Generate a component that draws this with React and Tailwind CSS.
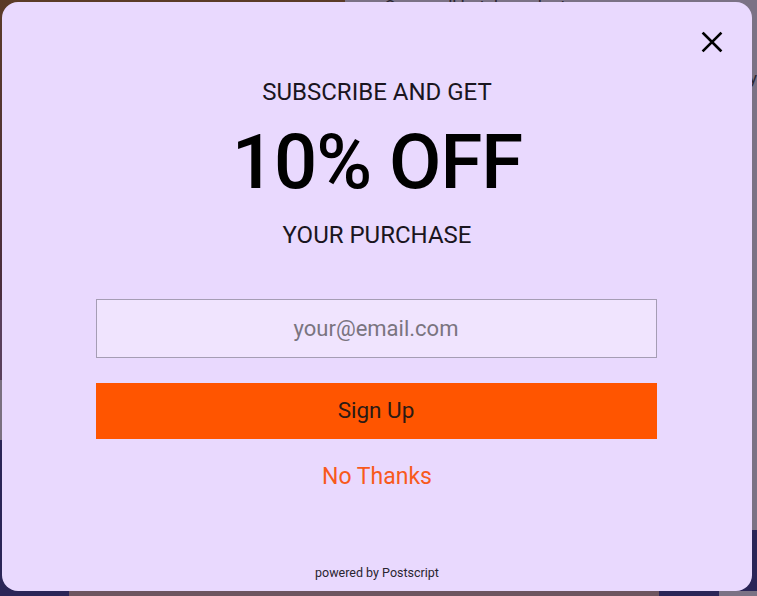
import React from "react";

const App = () => {
  return (
    <div className="relative h-[596px] w-[757px] overflow-hidden bg-[#7b7285]" style={{ fontFamily: "Roboto, 'Liberation Sans', sans-serif" }}>
      {/* page behind the popup, dimmed */}
      <div className="flex h-[530px]">
        <div className="flex w-[357px] flex-col">
          <div className="h-[300px] bg-gradient-to-b from-[#5b3b27] to-[#4a2c3e]"></div>
          <div className="h-[80px] bg-[#5a3f5c]"></div>
          <div className="h-[60px] bg-[#7a7080]"></div>
          <div className="flex-1 bg-[#2b2557]"></div>
        </div>
        <div className="flex-1 bg-[#7b7285] pl-[39px] text-[17px] leading-[24px] text-[#2a2530]">
          <p className="-mt-[6px]">Our small batch product</p>
          <p className="pl-[358px]">t</p>
          <p className="pl-[358px]">z</p>
          <p className="pl-[356px]">sy</p>
        </div>
      </div>
      <div className="flex h-[66px] bg-[#2b2557]">
        <div className="w-[69px]"></div>
        <div className="mt-[61px] h-[5px] w-[590px] bg-[#6e5560]"></div>
        <div className="w-[60px]"></div>
        <div className="mt-[61px] h-[5px] flex-1 bg-[#7b7285]"></div>
      </div>

      {/* popup */}
      <div className="absolute left-[2px] top-[2px] flex h-[589px] w-[750px] flex-col items-center rounded-[16px] bg-[#e9d9fe]">
        <button className="absolute right-[28px] top-[28px] text-black">
          <svg width="24" height="24" viewBox="0 0 24 24" fill="none" stroke="currentColor" strokeWidth="2.6" strokeLinecap="square">
            <path d="M3.5 3.5 L20.5 20.5 M20.5 3.5 L3.5 20.5" />
          </svg>
        </button>

        <p className="mt-[76px] text-[24px] leading-[28px] text-[#1a1520]">SUBSCRIBE AND GET</p>
        <p className="mt-[12px] text-[76px] font-medium leading-[88px] tracking-[-1px] text-black">10% OFF</p>
        <p className="mt-[15px] text-[24px] leading-[28px] text-[#1a1520]">YOUR PURCHASE</p>

        <input
          type="email"
          placeholder="your@email.com"
          className="mt-[50px] mr-[2px] h-[59px] w-[561px] border border-[#a59db4] bg-[#f0e4fe] text-center text-[22px] text-[#333] outline-none placeholder:text-[#7a7480]"
        />
        <button className="mt-[25px] mr-[2px] h-[56px] w-[561px] bg-[#ff5500] text-[22.5px] text-[#2b1a14]">Sign Up</button>
        <button className="mt-[25px] text-[23px] leading-[26px] text-[#f85a1c]">No Thanks</button>

        <p className="mt-auto mb-[8px] text-[12.5px] text-[#2a2530]">powered by Postscript</p>
      </div>
    </div>
  );
};

export default App;
